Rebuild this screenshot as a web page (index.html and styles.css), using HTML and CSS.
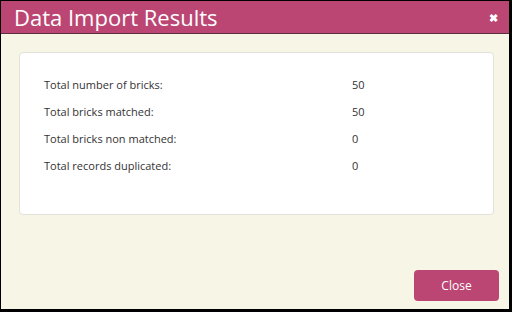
FILE: index.html
```html
<!DOCTYPE html>
<html>
	<head>
		<meta charset="utf-8" />
		<title>Data Import Results</title>
		<link rel="stylesheet" href="styles.css">
	</head>
	<body>
		<div class="Dialog">
			<div class="DialogTitle">
				<span class="TitleText">Data Import Results</span>
				<span class="CloseIcon">&#10006;</span>
			</div>
			<div class="DialogBody">
				<div class="ResultsBox">
					<table class="ResultsTable" cellpadding="0" cellspacing="0" border="0">
						<tr><td class="Label">Total number of bricks:</td><td class="Value">50</td></tr>
						<tr><td class="Label">Total bricks matched:</td><td class="Value">50</td></tr>
						<tr><td class="Label">Total bricks non matched:</td><td class="Value">0</td></tr>
						<tr><td class="Label">Total records duplicated:</td><td class="Value">0</td></tr>
					</table>
				</div>
				<div class="ButtonBar">
					<button class="BtnClose" type="button">Close</button>
				</div>
			</div>
		</div>
	</body>
</html>
```

FILE: styles.css
```css
html, body		{ margin: 0 ; padding: 0 ; }
body			{ font-family: "Open Sans", "Noto Sans", sans-serif ; background: #000 ; }
.Dialog			{ width: 508px ; height: 308px ; margin: 1px 3px 3px 1px ; background: #f7f5e6 ; display: flex ; flex-direction: column ; }
.DialogTitle	{ height: 32px ; background: #bc4673 ; border-bottom: 1px solid #5a3040 ; display: flex ; align-items: center ; justify-content: space-between ; padding: 0 14px 0 13px ; }
.TitleText		{ color: #fff ; font-size: 22px ; line-height: 32px ; }
.CloseIcon		{ color: #fff ; font-size: 11px ; font-weight: bold ; margin-right: -3px ; }
.DialogBody		{ flex: 1 ; display: flex ; flex-direction: column ; padding: 18px 10px 8px 18px ; }
.ResultsBox		{ height: 163px ; margin-right: 5px ; background: #fff ; border: 1px solid #e2e1da ; border-radius: 4px ; padding: 18px 0 0 24px ; box-sizing: border-box ; }
.ResultsTable	{ font-size: 11px ; color: #333 ; }
.ResultsTable td	{ height: 27px ; padding: 0 ; }
.Label			{ width: 308px ; }
.ButtonBar		{ flex: 1 ; display: flex ; justify-content: flex-end ; align-items: flex-end ; }
.BtnClose		{ width: 85px ; height: 31px ; background: #bc4673 ; color: #fff ; border: 0 ; border-radius: 4px ; font-family: "Open Sans", "Noto Sans", sans-serif ; font-size: 12px ; }
```
